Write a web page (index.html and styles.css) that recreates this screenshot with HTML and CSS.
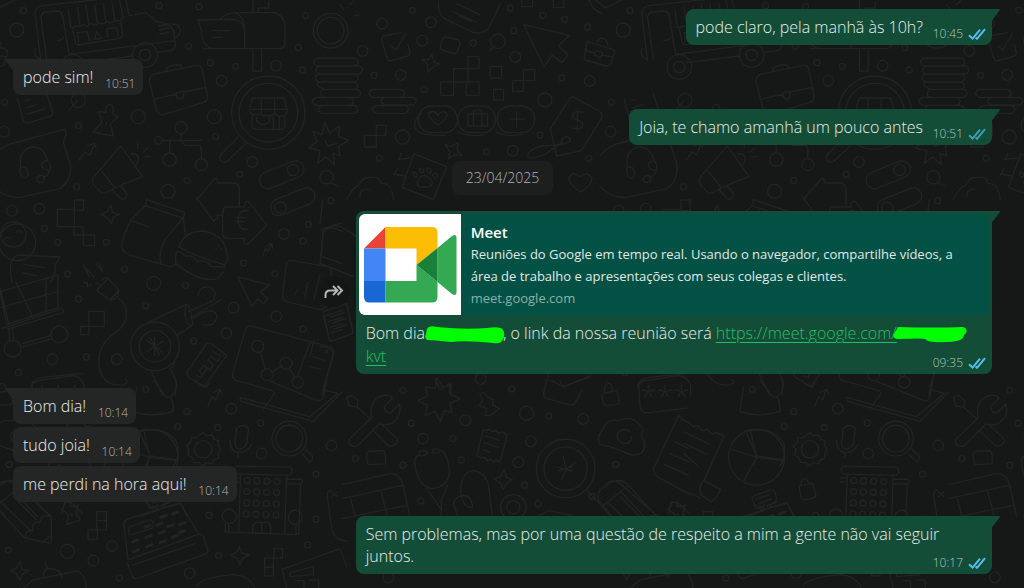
FILE: index.html
```html
<!DOCTYPE html>
<html lang="pt-BR">
<head>
    <meta charset="UTF-8">
    <title>Conversa</title>
    <link rel="stylesheet" href="styles.css">
</head>
<body>
    <svg class="wallpaper" aria-hidden="true">
        <defs>
            <symbol id="check" viewBox="0 0 18 12">
                <path d="M1 7.2 L4.6 10.6 L12 1.6 M7.6 9.6 L9 10.8 L17 1.2"/>
            </symbol>
            <symbol id="tail-out" viewBox="0 0 8 12">
                <path d="M0 0H7Q8.400 .4 7.600 1.600L0 11.500Z"/>
            </symbol>
            <symbol id="tail-in" viewBox="0 0 8 12">
                <path d="M8 0H1Q-.4 .4 .4 1.600L8 11.500Z"/>
            </symbol>

            <!-- one tile, drawn at three units per pixel, 1820 units wide -->
            <g id="tile">
                <!-- van -->
                <path d="M122 180L106 45Q104 20 128 17L375 -10L388 47L438 38L470 65Q520 70 522 100L526 135Q525 150 510 152L470 157M398 168L240 188M140 178L123 52Q124 36 140 36L172 33Q186 34 188 48L207 163M172 122Q185 122 190 113M207 163L525 122M205 30L212 82Q222 86 228 77Q238 84 250 74Q262 82 272 71Q284 79 296 68Q308 76 320 65Q332 73 344 62Q358 66 370 52L358 0M232 22L240 76M258 18L266 72M284 14L292 70M310 10L318 66M336 8L345 62M218 88L226 124Q228 136 240 134L355 116Q368 114 368 104L362 64M232 98L262 94L268 122M232 98L236 126M290 95L284 118L304 115ZM322 86L350 82L355 110M320 88L324 112M476 78L505 72M478 90L506 84M480 102L508 96M516 72Q540 72 541 92Q540 110 524 113M106 145Q98 170 124 180"/>
                <circle cx="435" cy="165" r="37"/><circle cx="435" cy="165" r="17"/><circle cx="218" cy="201" r="37"/><circle cx="218" cy="201" r="17"/>
                <!-- mailbox -->
                <path d="M594 60L700 58Q734 62 734 100V146H640Q606 142 604 90ZM662 56Q680 38 710 38H820Q853 42 855 80V130Q854 146 838 146H610M710 40Q734 52 734 90M637 92H687M637 112H667M759 148V213H785V148M759 38V0M775 38V24H806V6"/>
                <circle cx="992" cy="92" r="52"/><circle cx="992" cy="92" r="40"/>
                <!-- briefcase -->
                <path d="M464 222L590 196Q603 195 607 208L623 290Q622 304 610 307L490 344Q475 345 470 330L448 244Q448 228 464 222ZM460 298L530 282M552 276L616 262M500 212L500 204Q520 190 544 196L546 206M528 278L552 274L550 292L540 298L530 292Z"/>
                <!-- stacked coins -->
                <path d="M952 174H1065Q1084 186 1065 198H952Q932 186 952 174M958 198H1080Q1094 210 1080 222H958Q938 210 958 198M956 222H1066Q1084 234 1066 246H956Q936 234 956 222M958 246H1066Q1080 257 1066 268H974Q940 257 958 246M970 268H1072Q1092 280 1072 292H970Q954 280 970 268M948 292H1052Q1070 304 1052 316H948Q926 304 948 292M965 316H1064Q1084 328 1064 340H965Q946 328 965 316M1118 268H1204Q1224 280 1204 292H1118Q1096 280 1118 268M1154 292H1240Q1258 303 1240 315H1154Q1132 303 1154 292M1128 317H1216Q1236 328 1216 340H1128Q1106 328 1128 317"/>
                <!-- magnifier with a shop -->
                <circle cx="805" cy="338" r="110"/><circle cx="805" cy="338" r="88"/>
                <path d="M716 410L664 462Q652 478 668 486Q676 488 684 482L738 430M758 294H852L862 330Q860 348 846 348Q830 350 824 340Q812 350 800 346Q788 350 780 342Q750 352 749 326ZM754 328H862M784 294V340M824 294V340M756 348V376Q758 388 770 388H846Q855 386 855 376V348M770 352V364Q790 384 808 364V350M820 388V350M838 388V350"/>
                <!-- note, pin, megaphone -->
                <path d="M52 294L70 362Q76 370 86 368L148 350Q160 346 158 336L140 282M76 302L88 298M78 324L108 314M84 342L136 326M232 302L207 332M318 338Q314 314 330 313Q346 318 338 342L354 350L332 372L340 408L280 396L306 366L296 334ZM320 366L317 376M238 480L256 456L270 466L284 430L262 438M284 430L288 444M362 438L280 532Q274 548 286 560L304 578Q312 582 322 576L370 552L428 530ZM305 514L345 564M336 568L362 596Q378 602 382 582L362 558M394 462Q412 458 416 476Q416 486 408 494M413 430V446M430 456L444 444M434 470H452"/>
                <circle cx="235" cy="301" r="21"/>
                <!-- headset bubble -->
                <path d="M-20 470Q-5 445 30 432L194 388Q204 392 190 428L210 490Q218 540 180 566L60 592Q20 596 -20 560M62 502Q54 452 95 441Q135 440 142 484M60 506Q74 494 82 510Q90 532 72 534Q58 530 60 506M126 490Q134 478 146 486Q158 508 142 512Q124 508 126 490M150 506Q146 526 130 534M110 536Q118 520 132 530Q136 546 120 548Q108 546 110 536"/>
                <!-- nodes -->
                <path d="M487 421H605M543 400V421L556 436H596Q604 438 604 446V475M509 421V460M590 600L645 535Q654 536 654 549H704Q718 552 718 570V600M942 1020L930 1070"/>
                <circle cx="475" cy="421" r="11"/><circle cx="543" cy="383" r="18"/><circle cx="509" cy="479" r="20"/><circle cx="604" cy="494" r="18"/>
                <rect x="775" y="500" width="140" height="50" rx="25" transform="rotate(-22 843 524)"/><circle cx="879" cy="510" r="17"/>
                <rect x="809" y="580" width="140" height="50" rx="25" transform="rotate(-22 879 606)"/><circle cx="842" cy="623" r="17"/>
                <path d="M974 368L990 400L1018 378L1016 410L1046 420L1016 440L1020 468L1000 460L1004 494L978 470L954 490L960 452L926 444L952 424L938 394L966 404ZM976 422L984 438L1012 430M996 550L1014 558"/><circle cx="980" cy="532" r="20"/>

                <!-- upper middle -->
                <g transform="translate(1026 0)">
                    <path d="M290 6Q286 50 320 62L390 96Q420 106 440 84L476 10M345 12L414 44M330 34L404 66M350 48L388 64M124 108L176 98M124 108Q116 114 122 130L136 176Q138 184 148 182L198 168Q206 164 202 154L198 132M148 138L162 150L192 100M238 178L258 180L270 164L276 186L294 192L274 200L258 216L256 192ZM300 118Q306 108 316 112L350 120L354 132L346 156Q344 162 334 160L300 150Q292 146 296 138ZM442 154L456 140M546 74L682 106L650 138L678 164L660 188L630 166L606 202ZM736 124L812 148Q820 152 816 162L806 194Q802 200 794 198L730 180Q724 176 728 168ZM728 150L760 160M782 166L810 170M766 124Q776 108 792 120L798 136M762 152L782 158L776 172L758 166Z"/>
                    <circle cx="468" cy="124" r="22"/>
                    <path d="M296 246H335V286H296ZM335 246V206H378V246ZM378 206V170H411V206ZM373 246H411V286H373ZM444 199H479V234H444ZM455 268H485V300H455ZM544 209H578V242H544ZM512 242H544V274H512ZM67 406H103V441H67ZM103 376H132V406H103Z"/>
                    <rect x="230" y="318" width="116" height="80" rx="38"/><rect x="348" y="318" width="112" height="80" rx="38"/><rect x="466" y="318" width="112" height="80" rx="38"/>
                    <path d="M238 340Q208 366 222 390Q240 408 310 406M348 396Q380 412 426 404M462 394Q490 412 540 404M288 376Q254 350 262 338Q278 328 288 346Q300 328 314 340Q320 354 288 376M378 342H437V378H378ZM394 342V378M420 342V378M394 340V334Q406 326 420 334V340M502 357H546M524 334V380"/>
                    <path d="M694 290L776 336Q784 346 778 356L724 444Q720 452 708 454L644 468L625 386L680 300Q686 290 694 290M660 432Q656 412 672 410Q688 412 684 424Q676 434 600 438Q552 452 558 470Q566 482 610 462Q640 444 660 426M310 434L328 440L348 428L346 450L360 466L338 464L320 476L324 454ZM216 462L314 500L274 598L180 562ZM168 478L206 474M178 460L170 480M156 522L190 528M166 506L156 526M226 548Q232 526 248 526Q266 532 272 550Q266 566 248 560Q226 566 226 548M212 520Q220 510 226 526Q220 540 212 520M232 508Q242 498 246 516Q236 524 232 508M254 508Q264 498 268 514Q260 526 254 508M272 524Q284 512 286 530Q276 540 272 524M14 598Q34 560 50 556Q62 530 90 532Q112 528 118 550Q146 550 148 576Q156 582 154 598M54 590Q54 564 80 568M680 534Q692 510 714 530Q736 512 750 534Q750 556 716 576Q684 556 680 534M540 0V20H572V0M634 0V22H666V0M742 0Q750 30 780 40M760 0L790 24L840 0M6 30L-6 14M24 14L36 2M34 48L54 44"/>
                </g>

                <!-- middle left -->
                <g transform="translate(0 585)">
                    <path d="M172 43H223V95H172ZM223 15H251V46H223ZM222 95H249V120H222ZM250 120H284V152H250ZM267 349H313V394H267ZM242 394H267V419H242ZM304 58L322 50L332 30L338 52L360 58L340 66L334 86L324 70ZM440 14L554 52L550 70L436 32ZM436 32L394 74Q358 140 368 164Q372 176 400 184L500 212Q520 220 526 206M392 76L446 96M550 68L498 130Q474 170 482 206M550 68L556 120M536 156Q554 108 610 108Q684 120 682 196L674 210Q600 190 536 156M530 170Q524 188 528 206Q600 264 650 252L672 230M532 168Q546 176 560 184Q580 178 590 200Q620 192 632 214L676 216M656 150V154M648 160V162M664 160V162M588 6L640 78L654 68L652 60L668 62M668 56V120Q670 130 682 130H732V144Q740 152 748 144L800 90L748 22Q740 14 734 26V36H680Q668 38 668 56M718 0V34M788 184L796 160L804 170L816 146L800 152M816 146L818 160M714 246L808 270L782 290L804 314L790 326L774 312L756 334ZM870 196L980 214Q996 216 994 240M870 196Q858 200 858 214L848 300Q848 316 860 320L958 344Q970 344 976 334M890 286L886 298M924 262L914 304M960 240L942 312"/>
                    <circle cx="52" cy="142" r="55"/><circle cx="40" cy="118" r="38"/>
                    <path d="M54 180L180 186L164 212Q170 240 150 262M54 180Q20 196 36 262M70 208L134 218M68 234L110 242M12 136Q20 120 30 132M48 112Q56 100 66 112M0 290L174 240V338L20 388ZM0 278L26 386M48 262L98 366M138 250V350M0 338L172 290M6 400L186 340Q196 350 186 354L24 402M26 402L30 440M38 400L42 440M66 446L152 422M66 456L156 432M250 210L266 244L260 220L282 246M290 206L308 232L300 210M252 264L262 262L262 274L274 268M324 250L354 282Q360 300 344 312Q330 318 320 308L290 286ZM300 270L288 264M320 248L308 252M334 310Q350 296 356 286M356 310Q384 330 378 370Q370 400 330 424Q290 460 298 520Q310 574 370 570Q390 560 376 554"/>
                    <circle cx="38" cy="461" r="25"/><circle cx="178" cy="418" r="25"/>
                    <circle cx="465" cy="454" r="73"/><circle cx="465" cy="454" r="47"/>
                    <path d="M440 384L560 328Q572 330 578 390L532 420M560 330Q550 350 560 380Q570 396 578 390M570 370L666 312M566 350L640 316Q654 290 630 276Q600 272 594 300M580 370L610 352Q640 340 650 360Q650 396 610 390M464 426V482M440 436L488 472M440 470L490 438M450 428L478 480M454 530L488 600M510 520L530 560L526 600M510 520Q524 516 524 500M620 446Q630 442 640 450L680 482L612 576L566 546Q556 536 566 524ZM586 556L602 572M590 542L604 548L620 520L608 540L598 526L612 510L630 526L640 510L624 496L634 482L652 500L662 484L640 470"/>
                    <path d="M750 392L990 456Q1002 460 1000 476L966 600M750 392Q738 394 734 410L698 536Q696 552 708 556L820 588M930 444L892 545M780 470L796 522M816 532L846 512M868 520L884 546M938 484L974 496M930 514L964 524M976 466L984 474M984 466L976 474M970 364L1026 346M970 364L990 440L1026 428M984 380L1026 368M988 398L1026 386M992 414L1026 404M960 104L1026 84M970 110L964 184L1026 206M970 110Q990 88 1026 110"/>
                    <circle cx="773" cy="454" r="18"/><circle cx="801" cy="539" r="18"/><circle cx="858" cy="505" r="18"/><circle cx="893" cy="562" r="17"/>
                    <path d="M92 576Q96 560 120 556L200 544Q240 536 252 570V600"/>
                </g>

                <!-- middle -->
                <g transform="translate(960 600)">
                    <path d="M0 70L8 0M8 100Q30 60 80 90L110 110M10 90L0 190L100 230M10 335L80 310L100 400L30 425ZM30 352L72 338M36 370L76 356M40 388L80 374M0 440Q40 440 40 470L10 560M345 536L360 570L390 550L388 580M690 540L730 560L810 530"/>
                </g>

                <!-- lower left -->
                <g transform="translate(0 1140)">
                    <path d="M410 22L400 96Q460 114 520 94Q522 70 512 50M460 0L498 50Q510 56 518 44Q536 26 526 0M580 0L618 22L628 8M624 80L636 50L648 60L660 28L640 38M660 28L666 42M720 52L930 110L1014 40L970 30M720 52L722 64L940 124L1026 36M790 90L824 38M800 0L952 62Q964 66 970 50L980 0M420 154Q500 136 532 190Q538 240 520 258M420 158L450 228M450 228L534 240M450 228L440 258M710 146Q728 128 746 144L740 190Q730 212 712 206Q702 196 706 180ZM690 180Q690 216 718 218Q744 216 754 194M716 218L714 232M906 222L930 246Q942 240 936 226L916 208M610 158L622 168L636 164L642 178L656 182L654 196L662 208L654 220L656 234L642 240L634 252L620 248L608 258L598 248L582 248L578 234L564 226L568 210L560 198L572 188L574 174L590 172Z"/>
                    <circle cx="610" cy="208" r="26"/><circle cx="868" cy="176" r="52"/><circle cx="868" cy="176" r="40"/>
                    <!-- building -->
                    <rect x="704" y="260" width="172" height="24" rx="11" transform="rotate(1 790 272)"/>
                    <path d="M722 282L716 458M860 286L854 462M672 456L896 464M862 298H904Q912 306 904 312H862M902 312L896 462M716 294H700M716 306H700M758 456V436Q770 422 786 428Q810 424 812 440V460M785 428V458M676 430V456M686 430V456M888 432V462"/>
                    <circle cx="688" cy="409" r="21"/><circle cx="886" cy="412" r="21"/>
                    <circle cx="742" cy="302" r="9"/><circle cx="771" cy="303" r="9"/><circle cx="801" cy="304" r="9"/><circle cx="831" cy="305" r="9"/>
                    <circle cx="741" cy="335" r="9"/><circle cx="770" cy="336" r="9"/><circle cx="800" cy="337" r="9"/><circle cx="830" cy="338" r="9"/>
                    <circle cx="740" cy="369" r="9"/><circle cx="769" cy="370" r="9"/><circle cx="799" cy="371" r="9"/><circle cx="829" cy="372" r="9"/>
                    <circle cx="739" cy="402" r="9"/><circle cx="768" cy="403" r="9"/><circle cx="798" cy="404" r="9"/><circle cx="828" cy="405" r="9"/>
                    <!-- pencil, pin, register -->
                    <path d="M-60 330L74 474L150 490Q156 488 154 476V410L40 310Q20 296 0 310M40 350L110 420M76 470Q76 450 100 452Q92 424 120 426Q126 400 150 410M130 488Q134 474 154 470M6 370L90 450M194 366V378L184 388L206 404L200 434L242 420L228 402L236 376L212 380V366M212 400L216 408M290 395H319V422H290ZM290 422H319V450H290ZM264 450H292V479H264ZM822 506H848V534H822ZM794 534H820V562H794ZM794 562H820V588H794ZM32 572L50 564L60 544L66 568L86 572L66 584L60 600L50 582ZM692 526L710 518L718 500L726 520L748 524L728 536L720 554L712 536ZM442 368Q442 390 470 384L474 372M480 378L510 366M372 432Q374 420 386 416L540 368L592 456M372 432L384 540M384 540L600 462Q610 464 612 476L624 510Q624 520 612 524L410 596Q400 598 396 586L382 548M396 556L586 490M390 440L450 420Q460 420 460 432V438Q456 446 446 448L394 464Q386 464 386 450ZM130 590Q130 560 162 568Q180 570 186 592M136 546L142 566M70 624L100 600L230 574Q250 576 260 624M590 616Q610 592 700 584Q750 588 764 624M846 568L1020 506M846 568L860 624M870 578L940 560V584L870 590ZM890 602H912V624M930 600H956V624M1020 506L1040 560M994 330Q980 334 982 350L996 450Q1004 480 1040 484M996 336L1012 350M1012 336L996 350"/>
                    <g class="keys"><path d="M482 412l18 -6M518 402l16 -6M434 442l16 -6M470 436l16 -6M504 440l16 -6M538 434l16 -6M398 486l16 -6M438 472l16 -6M478 460l16 -6M400 516l16 -6M440 500l16 -6M480 488l16 -6M516 472l16 -6M538 458l16 -6"/></g>
                </g>

                <!-- lower middle -->
                <g transform="translate(1026 1110)">
                    <path d="M14 82L30 76L48 92L46 112L22 108ZM46 112L84 146M112 80Q140 70 152 84L126 110Q128 128 144 130L172 102Q182 138 150 160Q130 168 112 162L50 224Q40 234 26 226Q16 216 24 206L88 144Q82 96 112 80M94 182L136 224Q150 234 162 222Q172 212 160 200L120 164M286 24L302 52L328 44L326 74L356 86L324 100L330 128L306 122L296 154L278 124L250 136L256 106L228 92L258 78L250 50L278 56ZM414 72Q428 60 438 82L454 90L452 104L472 116L442 138L430 136L434 116L412 106L422 92ZM424 178L436 182L442 178L452 186L460 182L470 190L480 186L496 194L474 276L462 270L454 276L446 268L436 272L428 262L416 264L404 258ZM430 198L474 212M426 218L470 232M422 240L444 246M604 72L620 12M604 72Q606 84 616 86L680 104Q694 108 700 98L720 60M654 32L664 52L744 18M784 70L820 62Q828 62 832 96Q830 102 822 104L790 106Q784 104 780 76ZM788 66Q786 42 800 40Q814 44 810 62M890 40Q896 26 920 22L1040 10M890 40L894 110Q900 130 920 128L1040 114M774 224Q762 200 784 178Q790 146 830 152Q870 132 900 172Q908 184 898 196Q918 230 898 250Q880 262 850 248Q800 226 774 224M866 186Q840 168 826 194Q826 224 858 220Q870 210 868 200M1010 136L936 294Q934 312 950 322L1040 372M1010 136L1040 160M1000 216L1040 236M984 250L1040 276M968 284L1040 316M770 390Q764 370 780 356L810 336Q836 324 858 344L944 440M770 390L810 440M836 364L906 440M780 410L860 346"/>
                    <circle cx="671" cy="296" r="88"/><circle cx="671" cy="296" r="65"/>
                    <path d="M648 292L692 304M650 302L690 290M664 258L672 300L658 328M672 298L702 276M74 250Q80 240 90 244L124 242Q134 248 130 282L80 284Q74 280 74 250M232 244Q250 238 256 248Q246 262 232 256ZM272 240Q286 232 294 242Q284 256 272 246ZM232 256Q212 262 220 290Q230 350 270 356Q326 350 322 296Q314 242 294 242M254 354L298 420M318 344L298 392V440M358 378Q350 304 398 302Q434 310 440 350L452 440M358 378Q326 390 338 412L348 440M358 378Q386 370 392 410Q370 420 358 378M456 326L476 320L486 300L494 322L512 330L496 338L484 358L476 340ZM590 436L620 422L690 436M0 344L140 312Q176 308 184 350L204 440M0 386L182 346M26 386L40 440M116 362L136 436M0 446L196 406M980 430L988 396L1010 400L1040 430"/>
                    <circle cx="514" cy="412" r="38"/><circle cx="514" cy="412" r="20"/>
                </g>

                <!-- right of the previous block, wraps back to the tile start -->
                <g transform="translate(232 1110)">
                    <path d="M-10 148L18 158L26 170L44 168L52 182L72 178L80 192L100 188L120 198L60 332M0 186L74 222M0 220L66 252M0 250L44 290M60 332Q40 350 52 376L80 394Q90 398 110 358ZM-10 360L50 384"/>
                    <circle cx="218" cy="262" r="84"/>
                    <path d="M218 262L200 184M218 262L144 238M218 262L298 272M218 262L180 332M204 386Q210 374 224 372L262 360Q274 360 278 386Q276 400 256 404L262 412L310 400L330 440M204 386Q212 414 236 410L244 420L190 440M216 388L256 374M226 400L264 386M346 348L386 340L396 376Q394 384 384 386L358 390Q350 388 346 348M352 346Q350 326 362 326Q374 330 374 342"/>
                </g>

                <!-- loose dots -->
                <g>
                    <circle cx="70" cy="32" r="9"/><circle cx="50" cy="90" r="21"/><circle cx="477" cy="17" r="9"/><circle cx="597" cy="20" r="9"/><circle cx="566" cy="139" r="9"/><circle cx="631" cy="188" r="9"/><circle cx="707" cy="199" r="9"/><circle cx="828" cy="197" r="16"/><circle cx="895" cy="143" r="9"/><circle cx="917" cy="47" r="9"/><circle cx="908" cy="210" r="9"/><circle cx="665" cy="242" r="16"/>
                    <circle cx="14" cy="307" r="9"/><circle cx="12" cy="395" r="16"/><circle cx="415" cy="350" r="21"/><circle cx="643" cy="350" r="21"/><circle cx="236" cy="377" r="9"/><circle cx="647" cy="410" r="9"/><circle cx="757" cy="486" r="16"/><circle cx="719" cy="523" r="9"/><circle cx="561" cy="541" r="9"/><circle cx="504" cy="574" r="21"/><circle cx="230" cy="560" r="9"/>
                    <circle cx="1147" cy="71" r="16"/><circle cx="1237" cy="31" r="9"/><circle cx="1293" cy="67" r="16"/><circle cx="1267" cy="122" r="16"/><circle cx="1088" cy="153" r="16"/><circle cx="1420" cy="129" r="9"/><circle cx="1541" cy="92" r="9"/><circle cx="1531" cy="24" r="9"/><circle cx="1629" cy="46" r="9"/><circle cx="1694" cy="58" r="9"/><circle cx="1763" cy="81" r="9"/><circle cx="1546" cy="171" r="16"/><circle cx="1122" cy="226" r="9"/><circle cx="1202" cy="225" r="16"/><circle cx="1272" cy="269" r="9"/><circle cx="1635" cy="300" r="21"/><circle cx="1685" cy="234" r="9"/><circle cx="1769" cy="243" r="16"/><circle cx="1208" cy="411" r="21"/><circle cx="1138" cy="475" r="9"/><circle cx="1460" cy="456" r="9"/><circle cx="1538" cy="452" r="16"/><circle cx="1620" cy="405" r="9"/><circle cx="1767" cy="475" r="9"/>
                    <circle cx="36" cy="632" r="16"/><circle cx="118" cy="626" r="16"/><circle cx="133" cy="686" r="9"/><circle cx="173" cy="727" r="9"/><circle cx="319" cy="727" r="9"/><circle cx="374" cy="808" r="9"/><circle cx="203" cy="822" r="9"/><circle cx="461" cy="850" r="21"/><circle cx="556" cy="856" r="9"/><circle cx="236" cy="897" r="9"/><circle cx="437" cy="917" r="9"/><circle cx="701" cy="923" r="16"/><circle cx="731" cy="789" r="9"/><circle cx="825" cy="821" r="9"/><circle cx="852" cy="702" r="16"/><circle cx="909" cy="723" r="9"/><circle cx="925" cy="673" r="9"/><circle cx="993" cy="602" r="9"/><circle cx="829" cy="949" r="16"/><circle cx="909" cy="987" r="9"/><circle cx="679" cy="1000" r="16"/><circle cx="581" cy="1023" r="9"/><circle cx="350" cy="1078" r="16"/><circle cx="259" cy="1071" r="9"/><circle cx="157" cy="1078" r="16"/><circle cx="55" cy="1118" r="9"/><circle cx="437" cy="1168" r="9"/>
                    <circle cx="561" cy="1235" r="9"/><circle cx="694" cy="1226" r="16"/><circle cx="533" cy="1280" r="9"/><circle cx="653" cy="1283" r="9"/><circle cx="782" cy="1269" r="9"/><circle cx="785" cy="1361" r="16"/><circle cx="995" cy="1337" r="16"/><circle cx="948" cy="1423" r="9"/><circle cx="948" cy="1558" r="9"/><circle cx="923" cy="1635" r="9"/><circle cx="627" cy="1546" r="9"/><circle cx="656" cy="1667" r="9"/><circle cx="569" cy="1720" r="16"/><circle cx="336" cy="1638" r="16"/><circle cx="202" cy="1654" r="21"/><circle cx="280" cy="1682" r="16"/><circle cx="358" cy="1734" r="9"/><circle cx="25" cy="1651" r="9"/><circle cx="28" cy="1394" r="9"/>
                    <circle cx="1209" cy="1171" r="9"/><circle cx="1442" cy="1137" r="16"/><circle cx="1535" cy="1167" r="9"/><circle cx="1396" cy="1261" r="16"/><circle cx="1580" cy="1240" r="21"/><circle cx="1646" cy="1248" r="9"/><circle cx="1750" cy="1257" r="16"/><circle cx="1234" cy="1270" r="9"/><circle cx="1269" cy="1316" r="16"/><circle cx="1359" cy="1316" r="9"/><circle cx="1066" cy="1376" r="9"/><circle cx="1209" cy="1396" r="9"/><circle cx="1384" cy="1380" r="9"/><circle cx="1593" cy="1324" r="16"/><circle cx="1555" cy="1387" r="16"/><circle cx="1574" cy="1456" r="9"/><circle cx="1263" cy="1503" r="9"/><circle cx="1614" cy="1512" r="9"/><circle cx="1847" cy="1394" r="9"/><circle cx="1777" cy="1489" r="9"/><circle cx="1165" cy="1732" r="16"/>
                </g>
                <g class="signs">
                    <text x="1734" y="390" text-anchor="middle">$</text>
                    <text x="726" y="690" text-anchor="middle">€</text>
                    <text x="1995" y="1220" text-anchor="middle" class="stars">***</text>
                </g>
            </g>
        </defs>
        <g class="doodles" transform="scale(.3333)">
            <use href="#tile" x="-1820"/>
            <use href="#tile"/>
            <use href="#tile" x="1820"/>
        </g>
    </svg>

    <main class="chat">
        <div class="row out">
            <div class="bubble">
                <svg class="tail"><use href="#tail-out"/></svg>
                <p class="text">pode claro, pela manhã às 10h?</p>
                <div class="meta"><time>10:45</time><svg class="check"><use href="#check"/></svg></div>
            </div>
        </div>

        <div class="row in">
            <div class="bubble">
                <svg class="tail"><use href="#tail-in"/></svg>
                <p class="text">pode sim!</p>
                <div class="meta"><time>10:51</time></div>
            </div>
        </div>

        <div class="row out">
            <div class="bubble">
                <svg class="tail"><use href="#tail-out"/></svg>
                <p class="text">Joia, te chamo amanhã um pouco antes</p>
                <div class="meta dim"><time>10:51</time><svg class="check"><use href="#check"/></svg></div>
            </div>
        </div>

        <div class="date"><span>23/04/2025</span></div>

        <div class="row out">
            <button class="forward" type="button" aria-label="Encaminhar">
                <svg viewBox="0 0 20 14">
                    <path d="M1.500 13V10Q1.500 5.500 6 5.500H13M9 1L13.500 5.500L9 10M13.500 1L18 5.500L13.500 10"/>
                </svg>
            </button>
            <div class="bubble with-preview">
                <svg class="tail"><use href="#tail-out"/></svg>
                <a class="preview" href="https://meet.google.com">
                    <svg class="thumb" viewBox="0 0 102 101">
                        <rect width="102" height="101" fill="#fff"/>
                        <path d="M5 34.500L26.500 13V34.500Z" fill="#ea4335"/>
                        <path d="M26.500 13H73Q78.500 13 78.500 18.500V34L57.500 51V34.500H26.500Z" fill="#fbbc04"/>
                        <path d="M5 34.500H26.500V67H5Z" fill="#4285f4"/>
                        <path d="M5 67H26.500V88.500H10.500Q5 88.500 5 83Z" fill="#1967d2"/>
                        <path d="M26.500 67H57.500V51L78.500 68V83Q78.500 88.500 73 88.500H26.500Z" fill="#34a853"/>
                        <path d="M78.500 34L93 22Q97.500 19.500 97.500 24V78Q97.500 82.500 93 80L78.500 68Z" fill="#34a853"/>
                        <path d="M57.500 51L78.500 34V68Z" fill="#188038"/>
                    </svg>
                    <div class="preview-info">
                        <strong>Meet</strong>
                        <p>Reuniões do Google em tempo real. Usando o navegador, compartilhe vídeos, a área de trabalho e apresentações com seus colegas e clientes.</p>
                        <small>meet.google.com</small>
                    </div>
                </a>
                <p class="text">Bom dia<span class="scribble name"><svg viewBox="0 0 80 20" preserveAspectRatio="none"><path d="M2 4Q4 0 12 2Q40 5 62 3Q76 1 78 5Q81 10 77 16Q75 19 68 18Q40 15 26 17Q8 15 2 15Q-1 12 1 9Z"/></svg></span>, o link da nossa reunião será <a href="https://meet.google.com">https://meet.google.com/<span class="scribble code"><svg viewBox="0 0 76 20" preserveAspectRatio="none"><path d="M5 2Q40 3 70 2Q75 4 73 8Q70 10 70 13Q66 17 52 17Q36 18 32 14Q30 13 4 14Q-1 13 1 9Z"/></svg></span> kvt</a></p>
                <div class="meta"><time>09:35</time><svg class="check"><use href="#check"/></svg></div>
            </div>
        </div>

        <div class="row in">
            <div class="bubble">
                <svg class="tail"><use href="#tail-in"/></svg>
                <p class="text">Bom dia!</p>
                <div class="meta"><time>10:14</time></div>
            </div>
        </div>
        <div class="row in follow">
            <div class="bubble">
                <p class="text">tudo joia!</p>
                <div class="meta"><time>10:14</time></div>
            </div>
        </div>
        <div class="row in follow">
            <div class="bubble">
                <p class="text">me perdi na hora aqui!</p>
                <div class="meta"><time>10:14</time></div>
            </div>
        </div>

        <div class="row out">
            <div class="bubble long">
                <svg class="tail"><use href="#tail-out"/></svg>
                <p class="text">Sem problemas, mas por uma questão de respeito a mim a gente não vai seguir juntos.</p>
                <div class="meta"><time>10:17</time><svg class="check"><use href="#check"/></svg></div>
            </div>
        </div>
    </main>
</body>
</html>
```

FILE: styles.css
```css
body {
    margin: 0;
    min-height: 100vh;
    position: relative;
    overflow: hidden;
    background-color: #161717;
    color: #e9eeeb;
    font-family: "Open Sans", "Noto Sans", sans-serif;
    font-size: 16px;
    font-weight: 300;
    line-height: 22px;
}

p {
    margin: 0;
}

.wallpaper {
    position: absolute;
    top: 0;
    left: 0;
    width: 100%;
    height: 100%;
}

.doodles {
    fill: none;
    stroke: #222424;
    stroke-width: 4;
    stroke-linecap: round;
    stroke-linejoin: round;
}

.keys {
    stroke-width: 9;
}

.signs {
    fill: #222424;
    stroke: none;
    font-size: 80px;
}

.signs .stars {
    font-size: 90px;
}

.chat {
    position: relative;
    padding: 9px 32px 13px 13px;
}

.row {
    display: flex;
    align-items: center;
    margin-top: 14px;
}

.row:first-child {
    margin-top: 0;
}

.row.follow {
    margin-top: 3px;
}

.row.out {
    justify-content: flex-end;
}

.bubble {
    position: relative;
    display: grid;
    max-width: 65%;
    border-radius: 8px;
    background-color: #242626;
    fill: #242626;
}

.out .bubble {
    background-color: #144d37;
    fill: #144d37;
}

.tail {
    position: absolute;
    top: 0;
    width: 8px;
    height: 12px;
}

.out .tail {
    left: 100%;
}

.in .tail {
    right: 100%;
}

.row.out:not(.follow) .bubble {
    border-top-right-radius: 0;
}

.row.in:not(.follow) .bubble {
    border-top-left-radius: 0;
}

/* text and time share one cell, the padding keeps the time clear */
.text {
    grid-area: 2 / 1;
    padding: 7px 50px 7px 10px;
}

.out .text {
    padding-right: 69px;
}

.out .long .text,
.out .with-preview .text {
    padding-right: 12px;
}

.text a {
    color: #21c063;
    text-underline-offset: 3px;
}

.meta {
    grid-area: 2 / 1;
    align-self: end;
    justify-self: end;
    display: flex;
    align-items: center;
    gap: 5px;
    padding: 0 8px 3px 0;
    color: #b0b4b2;
    font-size: 12px;
    line-height: 16px;
}

.out .meta {
    padding-right: 6px;
    color: #b0c6bc;
}

.check {
    width: 18px;
    height: 12px;
    fill: none;
    stroke: #53bdeb;
    stroke-width: 2;
}

.dim .check {
    opacity: 0.7;
}

.date {
    display: flex;
    justify-content: center;
    margin: 16px 0;
}

.date span {
    padding: 6px 14px;
    border-radius: 8px;
    background-color: #1d1f1f;
    color: #b0b4b2;
    font-size: 14px;
}

.forward {
    display: flex;
    align-items: center;
    justify-content: center;
    width: 30px;
    height: 30px;
    margin-right: 7px;
    padding: 0;
    border: none;
    border-radius: 50%;
    background-color: #141515;
    cursor: pointer;
}

.forward svg {
    width: 20px;
    height: 14px;
    fill: none;
    stroke: #b4b6b5;
    stroke-width: 2;
}

.date + .row {
    margin-top: 0;
}

.preview {
    grid-area: 1 / 1;
    display: flex;
    margin: 3px 3px 0;
    overflow: hidden;
    border-radius: 6px;
    background-color: #025144;
    color: #e3e8e5;
    text-decoration: none;
}

.thumb {
    flex: none;
    width: 102px;
    height: 101px;
}

.preview-info {
    padding: 7px 30px 4px 10px;
    font-size: 13px;
    font-weight: 400;
}

.preview-info strong {
    display: block;
    color: #fff;
    font-size: 15px;
    font-weight: 600;
}

.preview-info small {
    display: block;
    color: #8cb0a8;
    font-size: 13px;
}

.scribble {
    display: inline-block;
    height: 20px;
    vertical-align: middle;
    fill: #00ff00;
}

.scribble svg {
    display: block;
    width: 100%;
    height: 100%;
}

.name {
    width: 80px;
    margin-right: -2px;
}

.code {
    width: 76px;
    margin-left: -4px;
}
```
